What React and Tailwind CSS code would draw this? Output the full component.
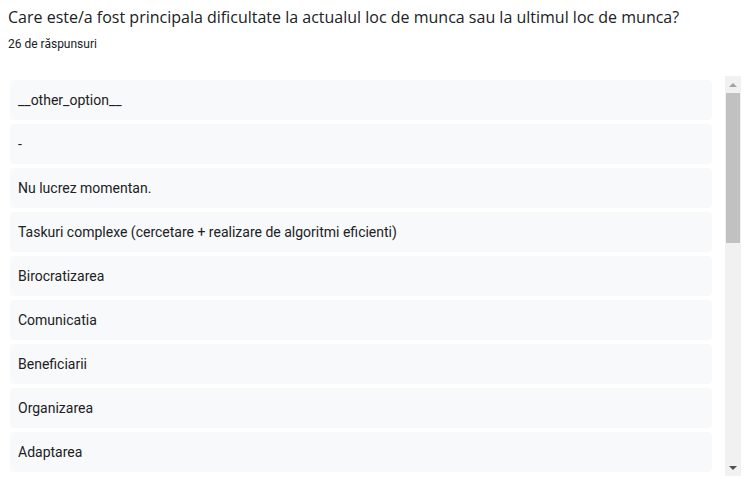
const answers = [
  '__other_option__',
  '-',
  'Nu lucrez momentan.',
  'Taskuri complexe (cercetare + realizare de algoritmi eficienti)',
  'Birocratizarea',
  'Comunicatia',
  'Beneficiarii',
  'Organizarea',
  'Adaptarea',
];

function Scrollbar() {
  return (
    <div className="flex flex-col w-[16px] h-[400px] bg-[#f1f1f1] shrink-0">
      <div className="h-[17px] flex items-center justify-center">
        <div className="w-0 h-0 border-l-[4px] border-r-[4px] border-b-[4px] border-l-transparent border-r-transparent border-b-[#a3a3a3]" />
      </div>
      <div className="mx-[1px] h-[150px] bg-[#c1c1c1]" />
      <div className="flex-1" />
      <div className="h-[17px] flex items-center justify-center">
        <div className="w-0 h-0 border-l-[4px] border-r-[4px] border-t-[4px] border-l-transparent border-r-transparent border-t-[#505050]" />
      </div>
    </div>
  );
}

export default function App() {
  return (
    <div className="w-[750px] h-[477px] overflow-hidden bg-white text-[#202124]" style={{ fontFamily: 'Roboto, "Liberation Sans", sans-serif' }}>
      <div className="px-[8px] pt-[5px]">
        <h1 className="text-[16px] leading-[24px] font-normal" style={{ fontFamily: '"Open Sans", Roboto, sans-serif' }}>
          Care este/a fost principala dificultate la actualul loc de munca sau la ultimul loc de munca?
        </h1>
        <p className="text-[12px] leading-[16px] mt-[7px]">26 de răspunsuri</p>
      </div>
      <div className="flex mt-[24px] pl-[10px] pr-[9px] gap-[13px]">
        <div className="flex-1 h-[400px] overflow-hidden pt-[4px] flex flex-col gap-[4px]">
          {answers.map((a, i) => (
            <div key={i} className="h-[40px] shrink-0 bg-[#f8f9fa] rounded-[4px] px-[8px] flex items-center text-[14px]">
              {a}
            </div>
          ))}
        </div>
        <Scrollbar />
      </div>
    </div>
  );
}
